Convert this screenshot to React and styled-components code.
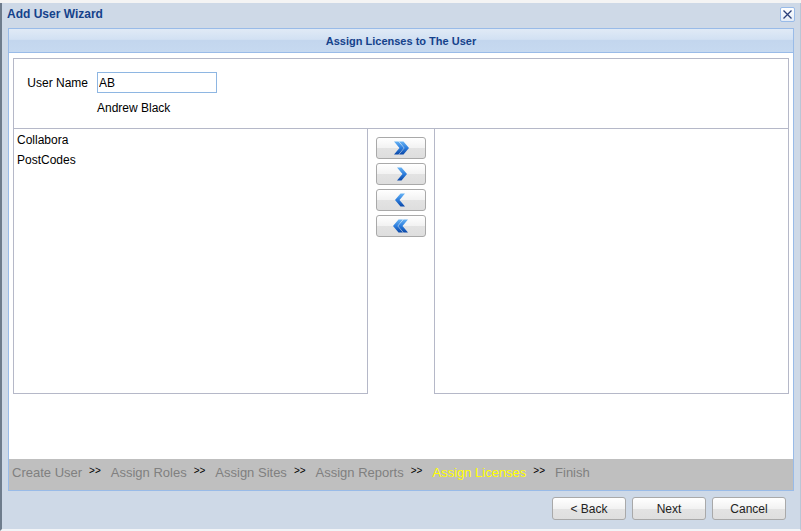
import React from 'react'
import styled, { createGlobalStyle } from 'styled-components'

const GlobalStyle = createGlobalStyle`
  html, body {
    margin: 0;
    padding: 0;
    background: #e4e4e4;
    font-family: "Liberation Sans", Arial, sans-serif;
  }
`;

const steps = ['Create User', 'Assign Roles', 'Assign Sites', 'Assign Reports', 'Assign Licenses', 'Finish']

function Chevron({ dir = 'right', double = false }) {
  const one = 'M2 0.5 L6.5 0.5 L12 7 L6.5 13.5 L2 13.5 L7.5 7 Z'
  const id = `g-${dir}-${double ? 2 : 1}`
  return (
    <svg width="18" height="14" viewBox="0 0 18 14">
      <defs>
        <linearGradient id={id} x1="0" y1="0" x2="0" y2="1">
          <stop offset="0" stopColor="#69b4f5" />
          <stop offset="0.5" stopColor="#2c7ddc" />
          <stop offset="1" stopColor="#0a47a8" />
        </linearGradient>
      </defs>
      <g
        fill={`url(#${id})`}
        transform={dir === 'left' ? 'translate(18,0) scale(-1,1)' : undefined}
      >
        {double ? (
          <>
            <path d={one} transform="translate(0,0)" />
            <path d={one} transform="translate(5,0)" />
          </>
        ) : (
          <path d={one} transform="translate(3,0)" />
        )}
      </g>
    </svg>
  )
}

function App() {
  return (
    <>
      <GlobalStyle />
      <Backdrop />
      <Window>
        <TitleBar>
          <span>Add User Wizard</span>
          <CloseBox>
            <svg width="11" height="11" viewBox="0 0 11 11">
              <path d="M1.5 1.5 L9.5 9.5 M9.5 1.5 L1.5 9.5" stroke="#2a3f7a" strokeWidth="1.3" />
            </svg>
          </CloseBox>
        </TitleBar>

        <Panel>
          <PanelHeader>Assign Licenses to The User</PanelHeader>
          <PanelBody>
            <UserBox>
              <FieldLabel>User Name</FieldLabel>
              <TextInput defaultValue="AB" />
              <span />
              <FullName>Andrew Black</FullName>
            </UserBox>
            <ListsRow>
              <ListBox>
                <ListItem>Collabora</ListItem>
                <ListItem>PostCodes</ListItem>
              </ListBox>
              <MoveColumn>
                <GrayButton $w={50} $h={22}><Chevron dir="right" double /></GrayButton>
                <GrayButton $w={50} $h={22}><Chevron dir="right" /></GrayButton>
                <GrayButton $w={50} $h={22}><Chevron dir="left" /></GrayButton>
                <GrayButton $w={50} $h={22}><Chevron dir="left" double /></GrayButton>
              </MoveColumn>
              <ListBox />
            </ListsRow>
          </PanelBody>
          <StepBar>
            {steps.map((s, i) => (
              <React.Fragment key={s}>
                <Step $active={s === 'Assign Licenses'}>{s}</Step>
                {i < steps.length - 1 && <StepSep>&gt;&gt;</StepSep>}
              </React.Fragment>
            ))}
          </StepBar>
        </Panel>

        <Footer>
          <GrayButton $w={74} $h={23}>&lt; Back</GrayButton>
          <GrayButton $w={74} $h={23}>Next</GrayButton>
          <GrayButton $w={74} $h={23}>Cancel</GrayButton>
        </Footer>
      </Window>
    </>
  )
}

export default App

const Backdrop = styled.div`
  height: 3px;
  background: #f4f4f4;
`;

const Window = styled.div`
  height: 526px;
  display: flex;
  flex-direction: column;
  background: #ced9e7;
  border-left: 2px solid #6e7c8c;
  border-right: 1px solid #b9c6d6;
  border-bottom: 2px solid #f2f4f7;
  padding: 0 6px;
`;

const TitleBar = styled.div`
  height: 25px;
  box-sizing: border-box;
  display: flex;
  align-items: flex-start;
  justify-content: space-between;
  padding-top: 4px;
  margin-left: -1px;
  font-size: 12px;
  font-weight: bold;
  color: #15428b;
`;

const CloseBox = styled.div`
  width: 13px;
  height: 13px;
  margin-right: -1px;
  border: 1px solid #99bbe8;
  border-radius: 2px;
  background: linear-gradient(#ffffff, #e3ecf7);
  display: flex;
  align-items: center;
  justify-content: center;
`;

const Panel = styled.div`
  border: 1px solid #99bbe8;
  display: flex;
  flex-direction: column;
`;

const PanelHeader = styled.div`
  height: 23px;
  display: flex;
  align-items: center;
  justify-content: center;
  font-size: 11px;
  font-weight: bold;
  color: #15428b;
  background: linear-gradient(#e0eaf6 0%, #d2e1f3 45%, #c3d6ee 50%, #c6d9f0 100%);
  border-bottom: 1px solid #99bbe8;
`;

const PanelBody = styled.div`
  height: 406px;
  background: #ffffff;
  padding: 5px 4px 0;
  box-sizing: border-box;
`;

const UserBox = styled.div`
  height: 71px;
  box-sizing: border-box;
  border: 1px solid #b5b8c8;
  display: grid;
  grid-template-columns: 74px auto;
  column-gap: 9px;
  row-gap: 7px;
  align-content: start;
  align-items: center;
  padding-top: 13px;
  font-size: 12px;
  color: #000;
`;

const FieldLabel = styled.span`
  text-align: right;
`;

const TextInput = styled.input`
  width: 120px;
  height: 21px;
  box-sizing: border-box;
  border: 1px solid #8eb6e2;
  padding: 0 1px;
  font-family: "Liberation Sans", Arial, sans-serif;
  font-size: 12px;
  color: #000;
  outline: none;
`;

const FullName = styled.span`
  line-height: 16px;
`;

const ListsRow = styled.div`
  display: flex;
  height: 265px;
`;

const ListBox = styled.div`
  width: 355px;
  box-sizing: border-box;
  border: 1px solid #b5b8c8;
  border-top: 0;
  padding: 1px 3px;
`;

const ListItem = styled.div`
  font-size: 12px;
  line-height: 20px;
  color: #000;
`;

const MoveColumn = styled.div`
  flex: 1;
  display: flex;
  flex-direction: column;
  align-items: center;
  gap: 4px;
  padding-top: 8px;
`;

const GrayButton = styled.div`
  width: ${p => p.$w}px;
  height: ${p => p.$h}px;
  box-sizing: border-box;
  border: 1px solid #a9a9a9;
  border-radius: 3px;
  background: linear-gradient(#ffffff 0%, #f2f2f2 50%, #e3e3e3 51%, #dedede 100%);
  display: flex;
  align-items: center;
  justify-content: center;
  font-size: 12px;
  color: #222;
  cursor: pointer;
`;

const StepBar = styled.div`
  height: 31px;
  background: #bfbfbf;
  display: flex;
  align-items: center;
  padding-left: 3px;
  padding-bottom: 5px;
  box-sizing: border-box;
`;

const Step = styled.span`
  font-size: 13px;
  color: ${p => (p.$active ? '#ffff00' : '#808080')};
`;

const StepSep = styled.span`
  font-size: 10px;
  color: #000;
  margin: -3px 10px 0 7px;
`;

const Footer = styled.div`
  display: flex;
  justify-content: flex-end;
  gap: 6px;
  padding: 6px 8px 0 0;
`;
